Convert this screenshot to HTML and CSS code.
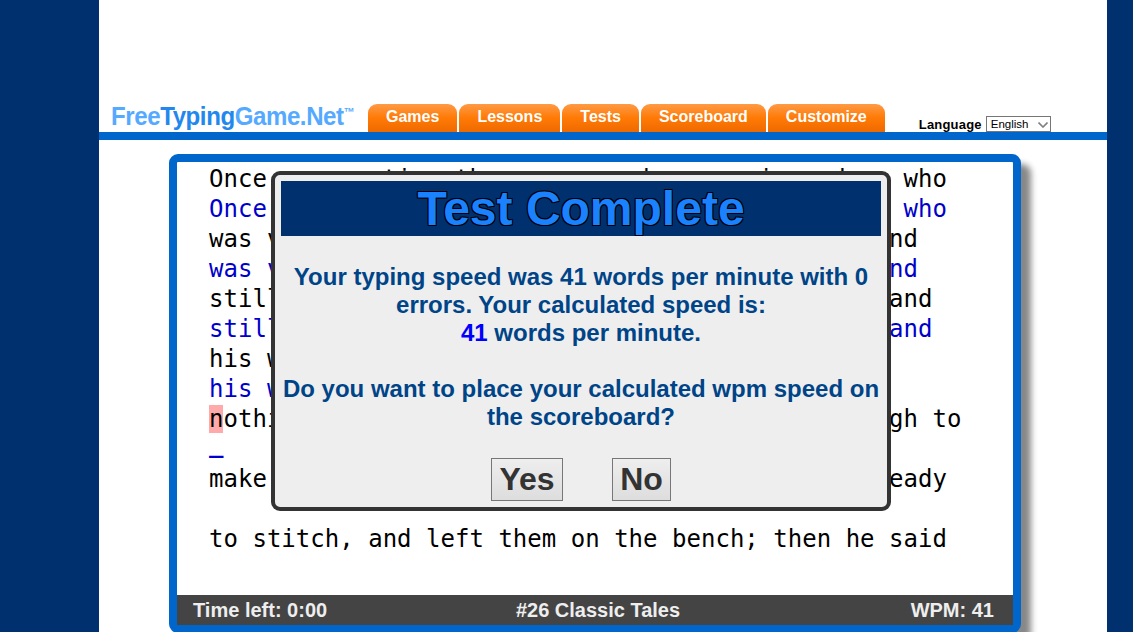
FILE: index.html
```html
<!DOCTYPE html>
<html lang="en">
<head>
<meta charset="utf-8">
<title>Free Typing Game</title>
<link rel="stylesheet" href="styles.css">
</head>
<body>
<div class="page">
  <header class="header">
    <div class="logo"><span class="logo-light">Free</span><span class="logo-dark">Typing</span><span class="logo-light">Game.Net</span><sup class="tm">™</sup></div>
    <nav class="tabs">
      <a class="tab">Games</a>
      <a class="tab">Lessons</a>
      <a class="tab">Tests</a>
      <a class="tab">Scoreboard</a>
      <a class="tab">Customize</a>
    </nav>
    <div class="language">
      <span class="language-label">Language</span>
      <div class="select-wrap">
        <select class="language-select"><option>English</option></select>
        <svg class="select-arrow" width="10" height="6" viewBox="0 0 10 6"><path d="M0.5 0.5L5 5L9.5 0.5" fill="none" stroke="#808080" stroke-width="1.6"/></svg>
      </div>
    </div>
  </header>
  <div class="rule"></div>
  <main class="content">
    <section class="panel">
      <div class="text">
        <div class="line">Once upon a time there was a shoe repairer dear who</div>
        <div class="line typed">Once upon a time there was a shoe repairer dear who</div>
        <div class="line">was very hardworking and honest, but so poor, and</div>
        <div class="line typed">was very hardworking and honest, but so poor, and</div>
        <div class="line">still he could not earn enough to live upon it and</div>
        <div class="line typed">still he could not earn enough to live upon it and</div>
        <div class="line">his work brought him so little that he had</div>
        <div class="line typed">his work brought him so little that he had</div>
        <div class="line"><span class="wrong">n</span>othing left in the world but some leather enough to</div>
        <div class="line typed"><span class="cursor">_</span></div>
        <div class="line">make one pair of shoes. He cut the pieces out ready</div>
        <div class="line typed"></div>
        <div class="line">to stitch, and left them on the bench; then he said</div>
      </div>
      <footer class="status">
        <span class="status-left">Time left: 0:00</span>
        <span class="status-mid">#26 Classic Tales</span>
        <span class="status-right">WPM: 41</span>
      </footer>
      <div class="dialog">
        <h1 class="dialog-title">Test Complete</h1>
        <p class="dialog-text">Your typing speed was 41 words per minute with 0 errors. Your calculated speed is:<br><span class="speed">41</span> words per minute.<br><br>Do you want to place your calculated wpm speed on the scoreboard?</p>
        <div class="dialog-actions">
          <button class="btn btn-yes">Yes</button>
          <button class="btn btn-no">No</button>
        </div>
      </div>
    </section>
  </main>
</div>
</body>
</html>
```
FILE: styles.css
```css
html, body {
  margin: 0;
  height: 632px;
  overflow: hidden;
}
body {
  background: #00306e;
  font-family: "Liberation Sans", Arial, sans-serif;
}
.page {
  width: 1008px;
  height: 632px;
  margin-left: 99px;
  background: #fff;
  overflow: hidden;
}
.header {
  display: flex;
  align-items: flex-end;
  height: 132px;
  box-sizing: border-box;
  padding-left: 12px;
}
.logo {
  width: 257px;
  height: 32px;
  font-size: 26px;
  font-weight: bold;
  line-height: 32px;
  letter-spacing: -0.45px;
  white-space: nowrap;
  transform: scaleX(0.925);
  transform-origin: left center;
}
.logo-light { color: #55aaff; }
.logo-dark { color: #2288ee; }
.tm {
  font-size: 12px;
  line-height: 0;
  color: #55aaff;
  vertical-align: 9px;
  letter-spacing: 0;
}
.tabs {
  display: flex;
  gap: 2px;
}
.tab {
  height: 28px;
  box-sizing: border-box;
  padding: 0 18px;
  border-radius: 9px 9px 0 0;
  background: linear-gradient(#ff9a45 0%, #ff7a05 50%, #ee6a00 100%);
  color: #fff;
  font-size: 16px;
  font-weight: bold;
  line-height: 26px;
}
.language {
  display: flex;
  align-items: flex-end;
  margin-left: 34px;
}
.language-label {
  font-size: 13px;
  font-weight: bold;
  color: #000;
  line-height: 14px;
  letter-spacing: 0.2px;
}
.select-wrap {
  position: relative;
  width: 65px;
  height: 16px;
  margin-left: 4px;
}
.language-select {
  display: block;
  width: 65px;
  height: 16px;
  margin: 0;
  padding: 0 0 0 4px;
  font-family: "Liberation Sans", Arial, sans-serif;
  font-size: 11.5px;
  background: #fff;
  color: #000;
  border: 1px solid #767676;
  border-radius: 0;
  appearance: none;
}
.select-arrow {
  position: absolute;
  top: 6px;
  right: 3px;
  pointer-events: none;
}
.rule {
  height: 8px;
  background: #0066cc;
}
.content {
  padding: 14px 0 0 70px;
}
.panel {
  position: relative;
  display: flex;
  flex-direction: column;
  width: 852px;
  height: 479px;
  box-sizing: border-box;
  border: 8px solid #0066cc;
  border-radius: 9px;
  box-shadow: 10px 10px 6px #888;
  background: #fff;
}
.text {
  flex: 1;
  padding: 2px 0 0 32px;
  font-family: "DejaVu Sans Mono", monospace;
  font-size: 24px;
  letter-spacing: 0.02px;
  color: #000;
}
.line {
  height: 30px;
  line-height: 30px;
  white-space: pre;
}
.typed {
  color: #0000cc;
}
.wrong {
  background: #ffaaaa;
}
.cursor {
  position: relative;
  top: -5px;
  font-weight: bold;
}
.status {
  display: grid;
  grid-template-columns: 1fr auto 1fr;
  height: 30px;
  box-sizing: border-box;
  padding: 0 19px 0 16px;
  background: #444;
  color: #eee;
  font-size: 20px;
  font-weight: bold;
  line-height: 30px;
}
.status-mid { margin-left: 9px; }
.status-right { text-align: right; }
.dialog {
  position: absolute;
  top: 9px;
  left: 94px;
  width: 620px;
  height: 340px;
  box-sizing: border-box;
  padding: 6px;
  border: 4px solid #333;
  border-radius: 9px;
  background: #eee;
  text-align: center;
}
.dialog-title {
  margin: 0;
  height: 55px;
  background: #00306e;
  color: #1a82ff;
  font-size: 48px;
  font-weight: bold;
  line-height: 55px;
  text-shadow: -1px -1px 0 #000, 1px -1px 0 #000, -1px 1px 0 #000, 1px 1px 0 #000;
}
.dialog-text {
  margin: 27px 0;
  color: #004488;
  font-size: 24px;
  font-weight: bold;
  line-height: 28px;
}
.speed {
  color: #0000ff;
}
.dialog-actions {
  display: flex;
  justify-content: center;
  gap: 49px;
}
.btn {
  height: 43px;
  box-sizing: border-box;
  padding: 0;
  border: 1px solid #777;
  background: linear-gradient(#eee, #ddd);
  color: #333;
  font-family: "Liberation Sans", Arial, sans-serif;
  font-size: 32px;
  font-weight: bold;
  line-height: 41px;
}
.btn-yes { width: 72px; }
.btn-no { width: 59px; }
```
